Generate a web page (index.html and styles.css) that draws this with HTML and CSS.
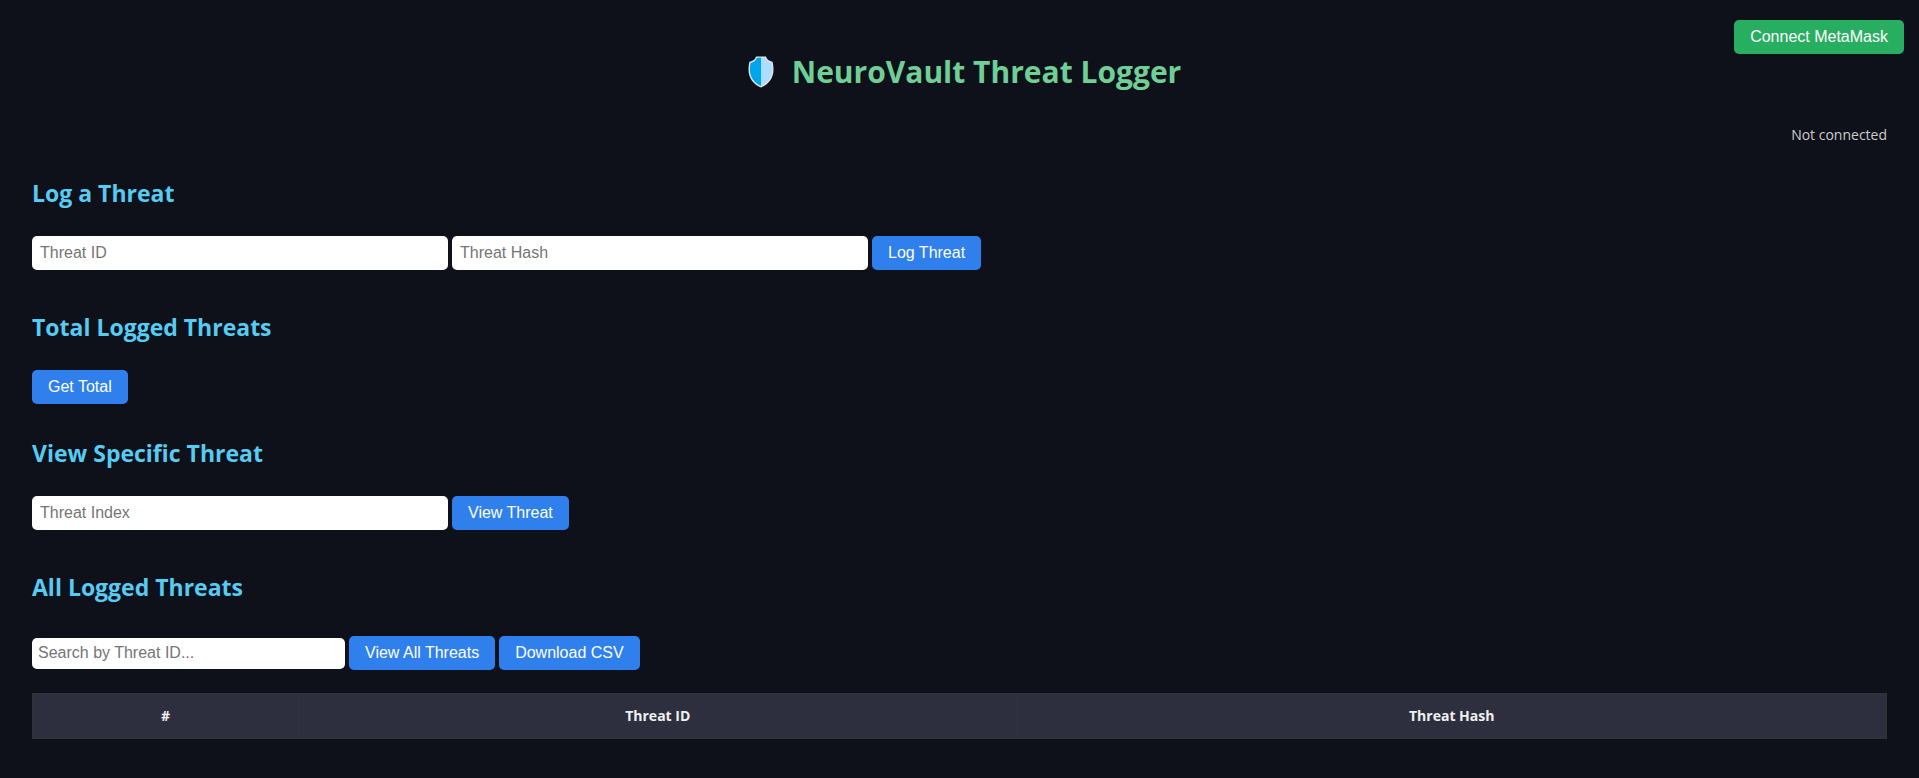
FILE: index.html
```
<!DOCTYPE html>
<html lang="en">
<head>
<meta charset="utf-8">
<meta name="viewport" content="width=device-width, initial-scale=1">
<title>NeuroVault Threat Logger</title>
<link rel="stylesheet" href="styles.css">
</head>
<body class="page">
<button class="button connect" type="button">Connect MetaMask</button>
<header class="header">
  <h1 class="title">
    <svg class="shield" viewBox="0 0 26 32" aria-hidden="true">
      <path d="M8 .5h10c.8 2.700 3.200 4.700 6.500 5.200.7 2.300 1 5 1 8C25.500 22 20.500 28.500 13 31.500 5.500 28.500.5 22 .5 13.700c0-3 .3-5.700 1-8C4.800 5.200 7.200 3.200 8 .5z" fill="#e1e4ea"/>
      <path d="M13 1.800H9C7.900 4.500 5.700 6.400 2.600 7 2.100 9 1.900 11.200 1.900 13.700 1.900 21.200 6.300 27.100 13 30z" fill="#00a6ed"/>
      <path d="M13 1.800h4c1.100 2.700 3.300 4.600 6.400 5.200.5 2 .7 4.200.7 6.700C24.100 21.200 19.700 27.100 13 30z" fill="#aedcff"/>
    </svg>
    <span>NeuroVault Threat Logger</span>
  </h1>
  <p class="status">Not connected</p>
</header>
<main class="content">
  <section class="section">
    <h2 class="heading">Log a Threat</h2>
    <form class="row row-fields">
      <input class="field" type="text" placeholder="Threat ID" aria-label="Threat ID">
      <input class="field" type="text" placeholder="Threat Hash" aria-label="Threat Hash">
      <button class="button" type="button">Log Threat</button>
    </form>
  </section>
  <section class="section">
    <h2 class="heading">Total Logged Threats</h2>
    <div class="row">
      <button class="button" type="button">Get Total</button>
    </div>
  </section>
  <section class="section">
    <h2 class="heading">View Specific Threat</h2>
    <form class="row row-fields">
      <input class="field" type="text" placeholder="Threat Index" aria-label="Threat Index">
      <button class="button" type="button">View Threat</button>
    </form>
  </section>
  <section class="section">
    <h2 class="heading">All Logged Threats</h2>
    <div class="row row-tools">
      <input class="search" type="text" placeholder="Search by Threat ID..." aria-label="Search by Threat ID">
      <button class="button" type="button">View All Threats</button>
      <button class="button" type="button">Download CSV</button>
    </div>
    <table class="table">
      <thead>
        <tr>
          <th class="col-index" scope="col">#</th>
          <th class="col-id" scope="col">Threat ID</th>
          <th scope="col">Threat Hash</th>
        </tr>
      </thead>
    </table>
  </section>
</main>
</body>
</html>
```
FILE: styles.css
```
* { box-sizing: border-box; }

.page {
  margin: 0;
  padding: 32px;
  background: #0e101a;
  color: #f0f0f0;
  font-family: "Segoe UI", "Open Sans", "Noto Sans", sans-serif;
  font-size: 16px;
}

.header { padding-top: 19px; }

.title {
  display: flex;
  justify-content: center;
  align-items: center;
  gap: 8px;
  margin: 0 0 31px;
  color: #6fcf97;
  font-size: 30px;
  line-height: 42px;
}

.shield { width: 46px; height: 32px; }

.status {
  margin: 0;
  color: #ccc;
  font-size: 14px;
  line-height: 22px;
  text-align: right;
}

.content { padding-top: 31px; }

.section { margin: 0 0 33px; }

.heading {
  margin: 0 0 27px;
  color: #56ccf2;
  font-size: 23px;
  line-height: 32px;
}

.row {
  display: flex;
  flex-wrap: wrap;
  align-items: center;
  gap: 4px;
}

.row-fields { padding-bottom: 8px; }
.row-tools { margin: 33px 0 23px; }

.field,
.search,
.button {
  border: 0;
  border-radius: 5px;
  font-family: Arial, "Liberation Sans", sans-serif;
  font-size: 16px;
  line-height: 18px;
}

.field {
  width: 416px;
  padding: 8px;
  background: #fff;
}

.search {
  width: 313px;
  height: 31px;
  padding: 6px;
  background: #fff;
}

.field::placeholder,
.search::placeholder { color: #757575; }

.button {
  padding: 8px 16px;
  background: #2f80ed;
  color: #fff;
  cursor: pointer;
}

.connect {
  position: absolute;
  top: 20px;
  right: 15px;
  background: #27ae60;
}

.table {
  width: 100%;
  border-collapse: collapse;
  font-size: 14px;
  line-height: 20px;
}

.table th {
  padding: 12px;
  border: 1px solid #333;
  background: #2d2f3f;
  text-align: center;
}

.table .col-index { width: 14.35%; }
.table .col-id { width: 38.75%; }
```
